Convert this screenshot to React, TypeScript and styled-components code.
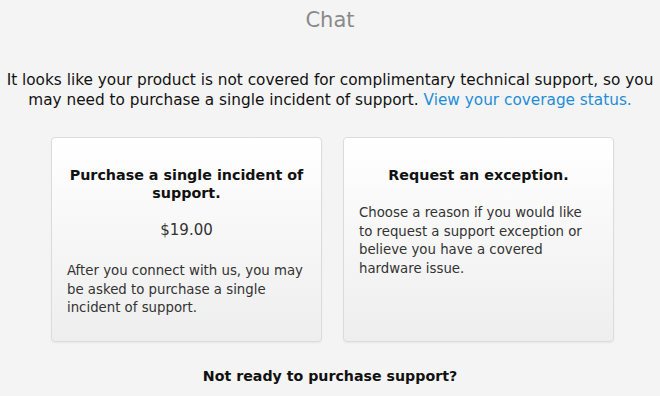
import React from "react";
import styled, { createGlobalStyle } from "styled-components";

const Global = createGlobalStyle`
  html, body { margin: 0; padding: 0; background: #f4f4f4; }
  body { font-family: "DejaVu Sans", "Lucida Grande", Verdana, sans-serif; -webkit-font-smoothing: antialiased; }
`;

const Page = styled.div`
  width: 660px;
  height: 396px;
  overflow: hidden;
  display: flex;
  flex-direction: column;
  align-items: center;
  color: #111;
`;

const Title = styled.h1`
  margin: 7px 0 0;
  font-size: 21px;
  line-height: 26px;
  font-weight: normal;
  color: #8a8a8a;
`;

const Intro = styled.p`
  margin: 37px 0 0;
  width: 660px;
  text-align: center;
  font-size: 15.3px;
  line-height: 20px;
  color: #111;
  white-space: nowrap;
`;

const Link = styled.a`
  color: #1f8dd6;
  text-decoration: none;
`;

const Cards = styled.div`
  margin: 27px 0 0 5px;
  display: grid;
  grid-template-columns: 271px 271px;
  gap: 21px;
`;

const Card = styled.div`
  height: 205px;
  box-sizing: border-box;
  padding: 28px 15px 0;
  border: 1px solid #dcdcdc;
  border-radius: 4px;
  background: linear-gradient(#ffffff, #eeeeee);
  box-shadow: 0 1px 2px rgba(0, 0, 0, 0.06);
  display: flex;
  flex-direction: column;
`;

const CardTitle = styled.h2`
  margin: 0;
  font-size: 14.3px;
  line-height: 18px;
  font-weight: bold;
  text-align: center;
  color: #111;
  white-space: nowrap;
`;

const Price = styled.div`
  margin-top: 19px;
  text-align: center;
  font-size: 15px;
  line-height: 18px;
  color: #333;
`;

const Body = styled.p<{ $top: number; $lh: number }>`
  margin: ${(p) => p.$top}px 0 0;
  font-size: 13.3px;
  line-height: ${(p) => p.$lh}px;
  color: #333;
  white-space: nowrap;
`;

const Footer = styled.h3`
  margin: 25px 0 0;
  font-size: 14.2px;
  line-height: 18px;
  font-weight: bold;
  color: #111;
`;

export default function App() {
  return (
    <>
      <Global />
      <Page>
        <Title>Chat</Title>
        <Intro>
          It looks like your product is not covered for complimentary technical support, so you
          <br />
          may need to purchase a single incident of support. <Link href="#">View your coverage status.</Link>
        </Intro>
        <Cards>
          <Card>
            <CardTitle>
              Purchase a single incident of
              <br />
              support.
            </CardTitle>
            <Price>$19.00</Price>
            <Body $top={23} $lh={18.5}>
              After you connect with us, you may
              <br />
              be asked to purchase a single
              <br />
              incident of support.
            </Body>
          </Card>
          <Card>
            <CardTitle>Request an exception.</CardTitle>
            <Body $top={20} $lh={18.5}>
              Choose a reason if you would like
              <br />
              to request a support exception or
              <br />
              believe you have a covered
              <br />
              hardware issue.
            </Body>
          </Card>
        </Cards>
        <Footer>Not ready to purchase support?</Footer>
      </Page>
    </>
  );
}
